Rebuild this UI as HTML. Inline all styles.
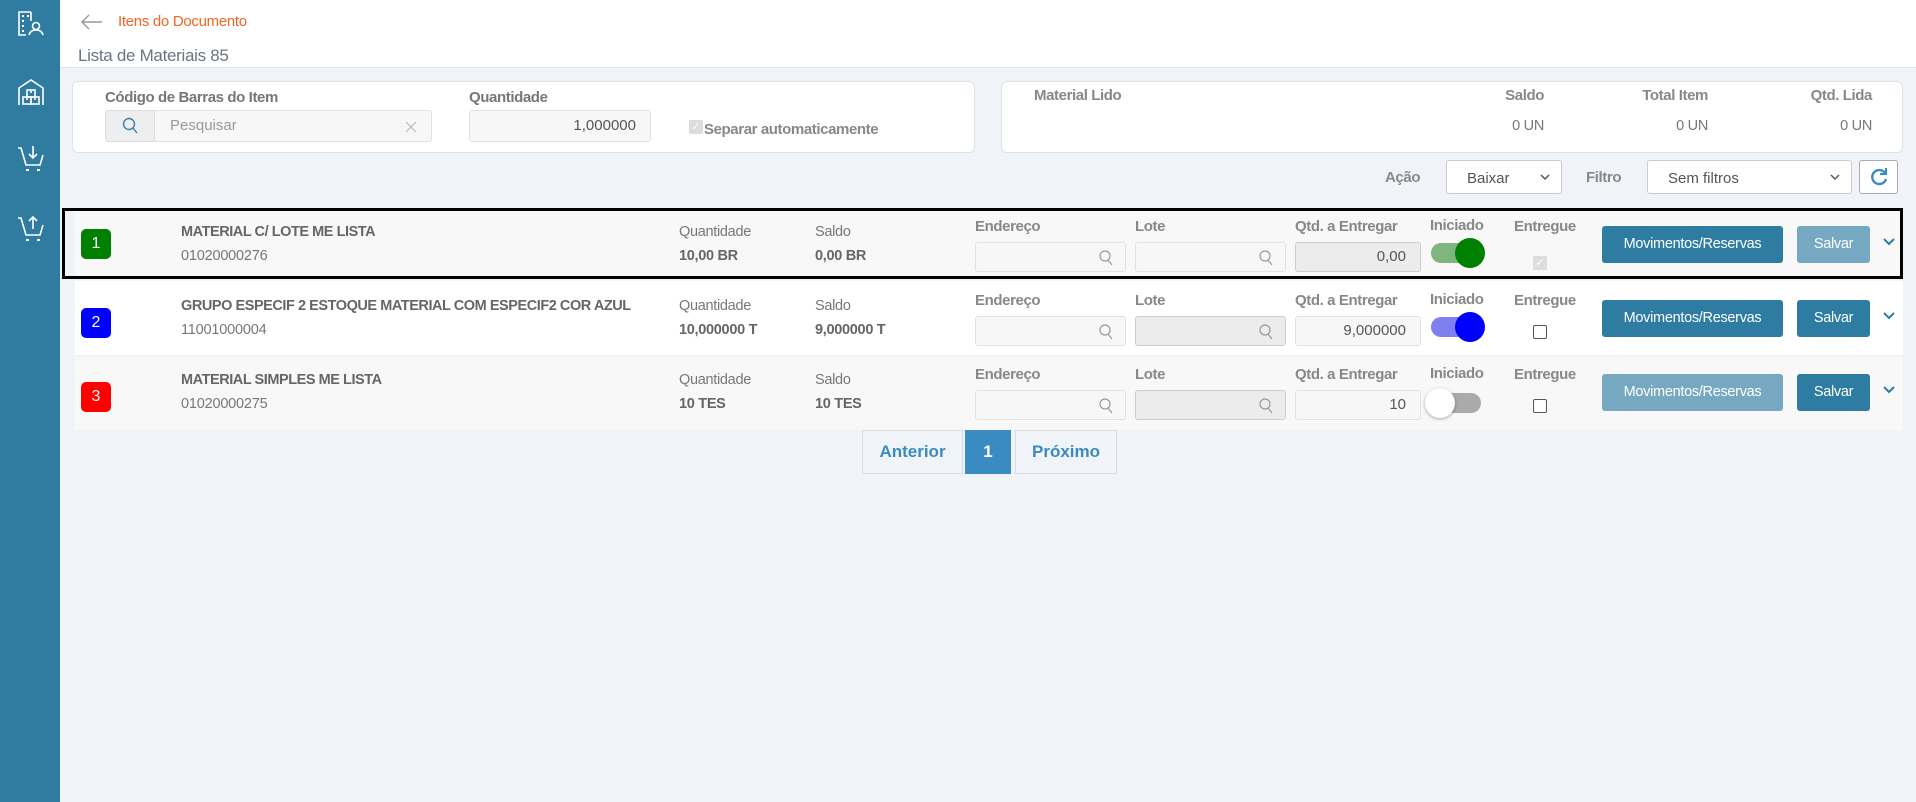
<!DOCTYPE html>
<html><head><meta charset="utf-8">
<style>
*{box-sizing:border-box;margin:0;padding:0}
body{width:1916px;height:802px;background:#f0f3f7;font-family:"Liberation Sans",sans-serif;color:#666;position:relative;overflow:hidden}
.abs{position:absolute}
.side{left:0;top:0;width:60px;height:802px;background:#2f7ca0}
.hdr{left:60px;top:0;width:1856px;height:68px;background:#fff;border-bottom:1px solid #dde3ea}
.card{background:#fff;border:1px solid #dde3ea;border-radius:6px}
.lbl{font-size:15px;font-weight:bold;color:#777;letter-spacing:-0.4px}
.inp{background:#f7f7f7;border:1px solid #e2e2e2;border-radius:3px}
.row{left:75px;width:1828px}
.nm{font-size:14.5px;font-weight:bold;color:#666;letter-spacing:-0.45px}
.cd{font-size:14.5px;color:#777;letter-spacing:-0.2px}
.t{font-size:14.5px;color:#777;letter-spacing:-0.3px}
.b{font-size:14.5px;font-weight:bold;color:#666;letter-spacing:-0.3px}
.btn{border-radius:3px;color:#fff;font-size:14.5px;text-align:center;line-height:37px;letter-spacing:-0.3px}
.badge{width:30px;height:30px;border-radius:5px;color:#fff;font-size:16px;text-align:center;line-height:30px}
.tgtrack{width:44px;height:20px;border-radius:10px}
.knob{width:30px;height:30px;border-radius:50%}
.cb{width:14px;height:14px;border:1.5px solid #555;border-radius:2px;background:#fff}
.pg{border:1px solid #d6dde5;background:#f0f3f7;color:#3a8cc0;font-size:17px;font-weight:bold;text-align:center;line-height:42px}
</style></head><body>
<div class="abs side">
<svg class="abs" style="left:17px;top:9px" width="28" height="28" viewBox="0 0 28 28" fill="none" stroke="#fff" stroke-width="1.6"><path d="M14 3H2v23h7"/><path d="M14 3v9"/><rect x="5" y="6" width="2" height="2" fill="#fff" stroke="none"/><rect x="10" y="6" width="2" height="2" fill="#fff" stroke="none"/><rect x="5" y="11" width="2" height="2" fill="#fff" stroke="none"/><rect x="5" y="16" width="2" height="2" fill="#fff" stroke="none"/><rect x="5" y="21" width="2" height="2" fill="#fff" stroke="none"/><circle cx="19" cy="17" r="3.5"/><path d="M12 26c1-4 4-5 7-5s6 1 7 5"/></svg>
<svg class="abs" style="left:17px;top:78px" width="28" height="28" viewBox="0 0 28 28" fill="none" stroke="#fff" stroke-width="1.6"><path d="M2 27V10L14 2l12 8v17"/><rect x="10" y="12" width="8" height="7"/><rect x="6" y="19" width="8" height="7"/><rect x="14" y="19" width="8" height="7"/><path d="M14 12v3M10 19v3M18 19v3"/></svg>
<svg class="abs" style="left:17px;top:144px" width="28" height="30" viewBox="0 0 28 30" fill="none" stroke="#fff" stroke-width="1.6"><path d="M1 4h3l5 17h14l3-10"/><path d="M16 2v12M12 10l4 4 4-4"/><rect x="9" y="25" width="3" height="2" fill="#fff" stroke="none"/><rect x="20" y="25" width="3" height="2" fill="#fff" stroke="none"/></svg>
<svg class="abs" style="left:17px;top:214px" width="28" height="30" viewBox="0 0 28 30" fill="none" stroke="#fff" stroke-width="1.6"><path d="M1 4h3l5 17h14l3-10"/><path d="M16 15V3M12 7l4-4 4 4"/><rect x="9" y="25" width="3" height="2" fill="#fff" stroke="none"/><rect x="20" y="25" width="3" height="2" fill="#fff" stroke="none"/></svg>
</div>
<div class="abs hdr"></div>
<svg class="abs" style="left:80px;top:13px" width="24" height="18" viewBox="0 0 24 18" fill="none" stroke="#999" stroke-width="1.4"><path d="M22 9H2M9 2L2 9l7 7"/></svg>
<div class="abs" style="left:118px;top:13px;font-size:15px;color:#f26522;letter-spacing:-0.3px">Itens do Documento</div>
<div class="abs" style="left:78px;top:46px;font-size:17px;color:#6a7580;letter-spacing:-0.3px">Lista de Materiais 85</div>

<div class="abs card" style="left:72px;top:81px;width:903px;height:72px"></div>
<div class="abs lbl" style="left:105px;top:89px">Código de Barras do Item</div>
<div class="abs inp" style="left:105px;top:110px;width:327px;height:32px"></div>
<div class="abs" style="left:105px;top:110px;width:50px;height:32px;background:#eceeef;border:1px solid #ddd;border-radius:3px 0 0 3px"></div>
<svg class="abs" style="left:121px;top:117px" width="18" height="18" viewBox="0 0 18 18" fill="none" stroke="#3a7fa6" stroke-width="1.4"><circle cx="8" cy="7" r="5.5"/><path d="M12 11l4 5"/></svg>
<div class="abs" style="left:170px;top:117px;font-size:15px;color:#999">Pesquisar</div>
<svg class="abs" style="left:405px;top:121px" width="12" height="12" viewBox="0 0 12 12" stroke="#bbb" stroke-width="1.2"><path d="M1 1l10 10M11 1L1 11"/></svg>
<div class="abs lbl" style="left:469px;top:89px">Quantidade</div>
<div class="abs inp" style="left:469px;top:110px;width:182px;height:32px;text-align:right;padding-right:14px;line-height:30px;font-size:15px;color:#555">1,000000</div>
<div class="abs" style="left:689px;top:120px;width:14px;height:14px;background:#ddd;border-radius:2px;color:#fff;font-size:11px;text-align:center;line-height:14px">✓</div>
<div class="abs lbl" style="left:704px;top:121px;color:#888">Separar automaticamente</div>

<div class="abs card" style="left:1001px;top:81px;width:902px;height:72px"></div>
<div class="abs lbl" style="left:1034px;top:87px;color:#888">Material Lido</div>
<div class="abs lbl" style="left:1400px;top:87px;width:144px;text-align:right;color:#888">Saldo</div>
<div class="abs lbl" style="left:1560px;top:87px;width:148px;text-align:right;color:#888">Total Item</div>
<div class="abs lbl" style="left:1720px;top:87px;width:152px;text-align:right;color:#888">Qtd. Lida</div>
<div class="abs t" style="left:1400px;top:118px;width:144px;text-align:right">0 UN</div>
<div class="abs t" style="left:1560px;top:118px;width:148px;text-align:right">0 UN</div>
<div class="abs t" style="left:1720px;top:118px;width:152px;text-align:right">0 UN</div>

<div class="abs lbl" style="left:1385px;top:169px;color:#888">Ação</div>
<div class="abs" style="left:1446px;top:160px;width:116px;height:34px;background:#fff;border:1px solid #ccc;border-radius:3px;font-size:15px;color:#555;padding:9px 0 0 20px">Baixar</div>
<svg class="abs" style="left:1540px;top:174px" width="10" height="7" viewBox="0 0 10 7" fill="none" stroke="#555" stroke-width="1.5"><path d="M1 1l4 4 4-4"/></svg>
<div class="abs lbl" style="left:1586px;top:169px;color:#888">Filtro</div>
<div class="abs" style="left:1647px;top:160px;width:205px;height:34px;background:#fff;border:1px solid #ccc;border-radius:3px;font-size:15px;color:#555;padding:9px 0 0 20px">Sem filtros</div>
<svg class="abs" style="left:1830px;top:174px" width="10" height="7" viewBox="0 0 10 7" fill="none" stroke="#555" stroke-width="1.5"><path d="M1 1l4 4 4-4"/></svg>
<div class="abs" style="left:1859px;top:160px;width:39px;height:34px;background:#fff;border:1px solid #aaa;border-radius:3px"></div>
<svg class="abs" style="left:1868px;top:166px" width="22" height="22" viewBox="0 0 22 22" fill="none" stroke="#3a8cc0" stroke-width="2.4"><path d="M17 7a7 7 0 1 0 1 6"/><path d="M18 2v6h-6" stroke-width="2"/></svg>

<div class="abs row" style="top:208px;height:71px;background:#f8f8f8"></div>
<div class="abs" style="left:62px;top:208px;width:1841px;height:71px;border:3px solid #000"></div>
<div class="abs row" style="top:281px;height:74px;background:#fff"></div>
<div class="abs row" style="top:357px;height:73px;background:#f8f8f8"></div>

<div class="abs badge" style="left:81px;top:229px;background:#008000">1</div>
<div class="abs nm" style="left:181px;top:224px">MATERIAL C/ LOTE ME LISTA</div>
<div class="abs cd" style="left:181px;top:248px">01020000276</div>
<div class="abs t" style="left:679px;top:224px">Quantidade</div>
<div class="abs b" style="left:679px;top:248px">10,00 BR</div>
<div class="abs t" style="left:815px;top:224px">Saldo</div>
<div class="abs b" style="left:815px;top:248px">0,00 BR</div>

<div class="abs badge" style="left:81px;top:308px;background:#0000ff">2</div>
<div class="abs nm" style="left:181px;top:298px">GRUPO ESPECIF 2 ESTOQUE MATERIAL COM ESPECIF2 COR AZUL</div>
<div class="abs cd" style="left:181px;top:322px">11001000004</div>
<div class="abs t" style="left:679px;top:298px">Quantidade</div>
<div class="abs b" style="left:679px;top:322px">10,000000 T</div>
<div class="abs t" style="left:815px;top:298px">Saldo</div>
<div class="abs b" style="left:815px;top:322px">9,000000 T</div>

<div class="abs badge" style="left:81px;top:382px;background:#ff0000">3</div>
<div class="abs nm" style="left:181px;top:372px">MATERIAL SIMPLES ME LISTA</div>
<div class="abs cd" style="left:181px;top:396px">01020000275</div>
<div class="abs t" style="left:679px;top:372px">Quantidade</div>
<div class="abs b" style="left:679px;top:396px">10 TES</div>
<div class="abs t" style="left:815px;top:372px">Saldo</div>
<div class="abs b" style="left:815px;top:396px">10 TES</div>

<div class="abs lbl" style="left:975px;top:218px;color:#888">Endereço</div>
<div class="abs lbl" style="left:1135px;top:218px;color:#888">Lote</div>
<div class="abs lbl" style="left:1295px;top:218px;color:#888">Qtd. a Entregar</div>
<div class="abs lbl" style="left:1430px;top:217px;color:#888">Iniciado</div>
<div class="abs lbl" style="left:1514px;top:218px;color:#888">Entregue</div>
<div class="abs inp" style="left:975px;top:242px;width:151px;height:30px"></div>
<div class="abs inp" style="left:1135px;top:242px;width:151px;height:30px"></div>
<div class="abs inp" style="left:1295px;top:242px;width:126px;height:30px;background:#ececec;border-color:#ccc;text-align:right;padding-right:14px;line-height:28px;font-size:15px;color:#555">0,00</div>
<div class="abs tgtrack" style="left:1431px;top:243px;background:#7fb57f"></div>
<div class="abs knob" style="left:1455px;top:238px;background:#008000"></div>
<div class="abs" style="left:1533px;top:256px;width:14px;height:14px;background:#ddd;border-radius:2px;color:#fff;font-size:11px;text-align:center;line-height:14px">✓</div>
<div class="abs btn" style="left:1602px;top:226px;width:181px;height:37px;background:#2e7ca1">Movimentos/Reservas</div>
<div class="abs btn" style="left:1797px;top:226px;width:73px;height:37px;background:#76a8c2">Salvar</div>

<div class="abs lbl" style="left:975px;top:292px;color:#888">Endereço</div>
<div class="abs lbl" style="left:1135px;top:292px;color:#888">Lote</div>
<div class="abs lbl" style="left:1295px;top:292px;color:#888">Qtd. a Entregar</div>
<div class="abs lbl" style="left:1430px;top:291px;color:#888">Iniciado</div>
<div class="abs lbl" style="left:1514px;top:292px;color:#888">Entregue</div>
<div class="abs inp" style="left:975px;top:316px;width:151px;height:30px"></div>
<div class="abs inp" style="left:1135px;top:316px;width:151px;height:30px;background:#ececec;border-color:#ccc"></div>
<div class="abs inp" style="left:1295px;top:316px;width:126px;height:30px;text-align:right;padding-right:14px;line-height:28px;font-size:15px;color:#555">9,000000</div>
<div class="abs tgtrack" style="left:1431px;top:317px;background:#7f7ff0"></div>
<div class="abs knob" style="left:1455px;top:312px;background:#0000ff"></div>
<div class="abs cb" style="left:1533px;top:325px"></div>
<div class="abs btn" style="left:1602px;top:300px;width:181px;height:37px;background:#2e7ca1">Movimentos/Reservas</div>
<div class="abs btn" style="left:1797px;top:300px;width:73px;height:37px;background:#2e7ca1">Salvar</div>

<div class="abs lbl" style="left:975px;top:366px;color:#888">Endereço</div>
<div class="abs lbl" style="left:1135px;top:366px;color:#888">Lote</div>
<div class="abs lbl" style="left:1295px;top:366px;color:#888">Qtd. a Entregar</div>
<div class="abs lbl" style="left:1430px;top:365px;color:#888">Iniciado</div>
<div class="abs lbl" style="left:1514px;top:366px;color:#888">Entregue</div>
<div class="abs inp" style="left:975px;top:390px;width:151px;height:30px"></div>
<div class="abs inp" style="left:1135px;top:390px;width:151px;height:30px;background:#ececec;border-color:#ccc"></div>
<div class="abs inp" style="left:1295px;top:390px;width:126px;height:30px;text-align:right;padding-right:14px;line-height:28px;font-size:15px;color:#555">10</div>
<div class="abs tgtrack" style="left:1437px;top:393px;background:#aaa"></div>
<div class="abs knob" style="left:1425px;top:388px;background:#fff;box-shadow:0 1px 3px rgba(0,0,0,.35)"></div>
<div class="abs cb" style="left:1533px;top:399px"></div>
<div class="abs btn" style="left:1602px;top:374px;width:181px;height:37px;background:#76a8c2">Movimentos/Reservas</div>
<div class="abs btn" style="left:1797px;top:374px;width:73px;height:37px;background:#2e7ca1">Salvar</div>

<svg class="abs" style="left:1882px;top:237px" width="14" height="10" viewBox="0 0 14 10" fill="none" stroke="#2e7ca1" stroke-width="2"><path d="M2 2l5 5 5-5"/></svg>
<svg class="abs" style="left:1882px;top:311px" width="14" height="10" viewBox="0 0 14 10" fill="none" stroke="#2e7ca1" stroke-width="2"><path d="M2 2l5 5 5-5"/></svg>
<svg class="abs" style="left:1882px;top:385px" width="14" height="10" viewBox="0 0 14 10" fill="none" stroke="#2e7ca1" stroke-width="2"><path d="M2 2l5 5 5-5"/></svg>

<svg class="abs" style="left:1098px;top:249px" width="16" height="18" viewBox="0 0 16 18" fill="none" stroke="#999" stroke-width="1.2"><circle cx="7" cy="7" r="5"/><path d="M10 11l4 5"/></svg>
<svg class="abs" style="left:1258px;top:249px" width="16" height="18" viewBox="0 0 16 18" fill="none" stroke="#999" stroke-width="1.2"><circle cx="7" cy="7" r="5"/><path d="M10 11l4 5"/></svg>
<svg class="abs" style="left:1098px;top:323px" width="16" height="18" viewBox="0 0 16 18" fill="none" stroke="#999" stroke-width="1.2"><circle cx="7" cy="7" r="5"/><path d="M10 11l4 5"/></svg>
<svg class="abs" style="left:1258px;top:323px" width="16" height="18" viewBox="0 0 16 18" fill="none" stroke="#999" stroke-width="1.2"><circle cx="7" cy="7" r="5"/><path d="M10 11l4 5"/></svg>
<svg class="abs" style="left:1098px;top:397px" width="16" height="18" viewBox="0 0 16 18" fill="none" stroke="#999" stroke-width="1.2"><circle cx="7" cy="7" r="5"/><path d="M10 11l4 5"/></svg>
<svg class="abs" style="left:1258px;top:397px" width="16" height="18" viewBox="0 0 16 18" fill="none" stroke="#999" stroke-width="1.2"><circle cx="7" cy="7" r="5"/><path d="M10 11l4 5"/></svg>

<div class="abs pg" style="left:862px;top:430px;width:101px;height:44px">Anterior</div>
<div class="abs pg" style="left:965px;top:430px;width:46px;height:44px;background:#3a8cc0;color:#fff;border-color:#3a8cc0">1</div>
<div class="abs pg" style="left:1015px;top:430px;width:102px;height:44px">Próximo</div>
</body></html>
